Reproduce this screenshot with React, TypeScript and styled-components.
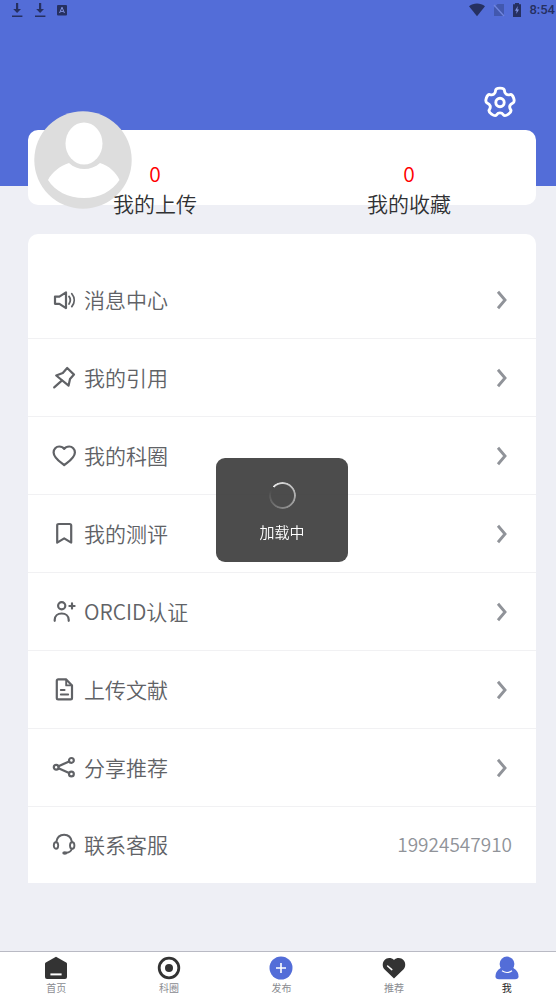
import React from "react";
import styled, { createGlobalStyle } from "styled-components";

const GlobalStyle = createGlobalStyle`
  * { box-sizing: border-box; }
  html, body { margin: 0; }
  body {
    background: #eeeff5;
    font-family: "Noto Sans CJK SC", sans-serif;
    font-weight: 350;
    color: #303133;
  }
  button { border: 0; padding: 0; background: none; font: inherit; color: inherit; cursor: pointer; }
  a { color: inherit; text-decoration: none; }
  svg { display: block; flex: none; }
`;

const Screen = styled.div`
  display: flex;
  flex-direction: column;
  min-height: 100vh;
  overflow-x: hidden;
`;

const Header = styled.header`
  display: flex;
  flex-direction: column;
  height: 186px;
  background: #536dd8;
`;

const StatusBar = styled.div`
  display: flex;
  align-items: center;
  justify-content: space-between;
  height: 20px;
  padding: 0 1px 0 10px;
  color: #263061;
`;

const StatusGroup = styled.div<{ $gap: number }>`
  display: flex;
  align-items: center;
  gap: ${(p) => p.$gap}px;
`;

const Clock = styled.time`
  font: 500 13px/20px Roboto, sans-serif;
`;

const SettingsButton = styled.button`
  align-self: flex-end;
  margin: 66px 40px 0 0;
  width: 32px;
  height: 32px;
  color: #fff;
`;

const Main = styled.main`
  flex: 1;
  padding: 0 20px 68px 28px;
`;

const ProfileCard = styled.section`
  position: relative;
  height: 75px;
  margin-top: -56px;
  border-radius: 10px;
  background: #fff;
`;

const Avatar = styled.div`
  position: absolute;
  left: 6px;
  top: -19px;
  width: 98px;
  height: 98px;
`;

const Stats = styled.div`
  position: relative;
  display: grid;
  grid-template-columns: 1fr 1fr;
  padding-top: 28px;
`;

const Stat = styled.a`
  display: flex;
  flex-direction: column;
  align-items: center;
  font-size: 21px;
  line-height: 30px;
`;

const StatCount = styled.span`
  color: #f00;
`;

const MenuCard = styled.section`
  margin-top: 29px;
  padding-top: 27px;
  border-radius: 10px 10px 0 0;
  background: #fff;
`;

const MenuRow = styled.button`
  display: flex;
  align-items: center;
  gap: 8px;
  width: 100%;
  height: 78px;
  padding: 0 24px;
  border-bottom: 1px solid #f1f1f3;
  color: #606266;
  text-align: left;

  &:last-child {
    height: 76px;
    border-bottom: 0;
  }
`;

const MenuLabel = styled.span`
  flex: 1;
  padding-bottom: 2px;
  font-size: 21px;
  line-height: 30px;
`;

const MenuValue = styled.span`
  padding-bottom: 2px;
  color: #909399;
  font-size: 19px;
  line-height: 30px;
`;

const Toast = styled.div`
  position: fixed;
  top: calc(50% + 12px);
  left: calc(50% + 4px);
  transform: translate(-50%, -50%);
  display: flex;
  flex-direction: column;
  align-items: center;
  gap: 12px;
  width: 132px;
  padding: 24px 0 19px;
  border-radius: 9px;
  background: rgba(56, 56, 56, 0.9);
  color: #fff;
  font-size: 15px;
  line-height: 22px;
`;

const Spinner = styled.div`
  width: 27px;
  height: 27px;
  border-radius: 50%;
  background: conic-gradient(from -45deg, #e8e8e8, #9a9a9a 50%, #4c4c4c 95%);
  mask: radial-gradient(circle, transparent 11px, #000 12px);
`;

const TabBar = styled.nav`
  display: grid;
  grid-template-columns: repeat(5, 1fr);
  height: 45px;
  margin-right: -7px;
  border-top: 1px solid #b9bac4;
  background: #fff;
`;

const Tab = styled.a<{ $active?: boolean }>`
  display: flex;
  flex-direction: column;
  align-items: center;
  padding-top: 4px;
  color: ${(p) => (p.$active ? "#1c1c1e" : "#8a8c91")};
  font-size: 10px;
  font-weight: 400;
  line-height: 16px;
`;

const LineIcon = ({ children }: { children: React.ReactNode }) => (
  <svg width="24" height="24" viewBox="0 0 24 24" fill="none" stroke="currentColor" strokeWidth="2.2" strokeLinejoin="round" strokeLinecap="round" aria-hidden="true">
    {children}
  </svg>
);

const DownloadIcon = () => (
  <svg width="14" height="16" viewBox="0 0 14 16" fill="currentColor" aria-hidden="true">
    <path d="M6 1h2.2v6h2.8L7.1 11 3.2 7H6zM2 13.4h10.4V15H2z" />
  </svg>
);

const Chevron = () => (
  <svg width="20" height="24" viewBox="0 0 20 24" fill="none" stroke="#909399" strokeWidth="2.9" aria-hidden="true">
    <path d="M6 3.8 13 12 6 20.2" />
  </svg>
);

// Five rounded lobes: quadratic curves run between the midpoints of a 20-point outline.
const gearPath = (() => {
  const points: [number, number][] = [];
  const add = (deg: number, r: number) => {
    const t = (deg * Math.PI) / 180;
    points.push([16 + r * Math.cos(t), 16.5 + r * Math.sin(t)]);
  };
  for (let i = 0; i < 5; i++) {
    const a = -90 + i * 72;
    add(a - 17, 15);
    add(a + 17, 15);
    add(a + 25, 10.6);
    add(a + 47, 10.6);
  }
  const n = points.length;
  const mid = (i: number) => {
    const [x1, y1] = points[i % n];
    const [x2, y2] = points[(i + 1) % n];
    return `${((x1 + x2) / 2).toFixed(2)} ${((y1 + y2) / 2).toFixed(2)}`;
  };
  const curves = points.map((_, i) => {
    const [x, y] = points[(i + 1) % n];
    return `Q${x.toFixed(2)} ${y.toFixed(2)} ${mid(i + 1)}`;
  });
  return `M${mid(0)}${curves.join("")}Z`;
})();

type MenuItem = { label: string; value?: string; icon: React.ReactNode };

const menu: MenuItem[] = [
  {
    label: "消息中心",
    icon: (
      <>
        <path d="M3 8.600h4.400l6.600-4.300v15.800l-6.600-4.300H3z" />
        <path d="M17 8.400c1.600 2.200 1.600 5.200 0 7.600M19.800 5.800c3.200 3.900 3.200 8.900 0 12.800" strokeWidth="1.800" />
      </>
    ),
  },
  {
    label: "我的引用",
    icon: (
      <>
        <path d="M15.2 2 22 8.600l-4 4.500-1.400 6.500L4.200 9.500 10.800 7z" />
        <path d="M9.800 14.600 2.200 21.400" />
      </>
    ),
  },
  {
    label: "我的科圈",
    icon: <path d="M12.200 21.200C8.400 18 1.600 13.800 1.600 8.400c0-3.400 2.500-5.900 5.600-5.900 2.100 0 3.900.8 5 2.400 1.100-1.600 2.900-2.400 5-2.400 3.100 0 5.700 2.500 5.700 5.900 0 5.400-6.900 9.600-10.700 12.800z" />,
  },
  {
    label: "我的测评",
    icon: <path d="M6.800 2h10.800c1.100 0 1.600.5 1.600 1.600v17l-7-4.200-7 4.200v-17C5.200 2.500 5.700 2 6.800 2z" />,
  },
  {
    label: "ORCID认证",
    icon: (
      <>
        <circle cx="9.700" cy="5.700" r="3.600" />
        <path d="M2.700 20.800v-1c0-3.800 3-6.300 7-6.300s7 2.500 7 6.300v1M20 3.400v5.200M17.400 6h5.200" />
      </>
    ),
  },
  {
    label: "上传文献",
    icon: (
      <>
        <path d="M6.200 1.400h8l5.800 6v12.600c0 .9-.5 1.400-1.400 1.400H6.200c-.9 0-1.400-.5-1.400-1.400V2.800c0-.9.5-1.400 1.400-1.400z" />
        <path d="M14.200 1.600v5.800h5.600M8.800 12h3.800M8.800 16.500h7.400" strokeWidth="1.900" />
      </>
    ),
  },
  {
    label: "分享推荐",
    icon: (
      <>
        <circle cx="4.200" cy="11.200" r="2.400" />
        <circle cx="19.400" cy="4.400" r="2.400" />
        <circle cx="19.400" cy="18" r="2.400" />
        <path d="M6.500 10.200 17.100 5.400M6.500 12.300l10.600 4.700" />
      </>
    ),
  },
  {
    label: "联系客服",
    value: "19924547910",
    icon: (
      <g strokeWidth="1.900">
        <ellipse cx="4" cy="12.500" rx="2.200" ry="3.300" />
        <ellipse cx="20.200" cy="12.500" rx="2.200" ry="3.300" />
        <path d="M4.200 9C5 4.300 8.200 1.700 12.100 1.700s7.100 2.600 7.900 7.300M19.800 16c-.8 2.300-2.400 3.500-5.400 3.800" />
        <ellipse cx="12.800" cy="20.100" rx="1.600" ry=".8" fill="currentColor" />
      </g>
    ),
  },
];

const tabs = [
  {
    label: "首页",
    icon: (
      <>
        <path d="M12 .8 22.200 6.600q.8.500.8 1.400v13q0 2-2 2H3q-2 0-2-2V8q0-.9.800-1.400z" fill="#333" />
        <path d="M6.400 18.400h11.200" stroke="#fff" strokeWidth="2" />
      </>
    ),
  },
  {
    label: "科圈",
    icon: (
      <>
        <circle cx="12" cy="12" r="9.800" fill="none" stroke="#333" strokeWidth="2.800" />
        <circle cx="12" cy="12" r="4" fill="#333" />
      </>
    ),
  },
  {
    label: "发布",
    icon: (
      <>
        <circle cx="12" cy="12" r="11.500" fill="#536dd8" />
        <path d="M12 7v10M7 12h10" stroke="#fff" strokeWidth="1.600" />
      </>
    ),
  },
  {
    label: "推荐",
    icon: (
      <>
        <path d="M12 22.600 2.400 13.200C.2 10.800.2 6.600 2.400 4.200 4.900 1.400 9.300 1.400 12 4c2.700-2.600 7.100-2.600 9.600.2 2.200 2.400 2.200 6.600 0 9z" fill="#333" />
        <path d="m5.600 10 4.200 3.600" stroke="#fff" strokeWidth="1.500" strokeLinecap="round" />
      </>
    ),
  },
  {
    label: "我",
    active: true,
    icon: (
      <>
        <path d="M7 11.600C3.200 13 .5 16.400.5 20.200c0 2.200 1.100 3 3.500 3h16c2.400 0 3.500-.8 3.500-3 0-3.800-2.700-7.200-6.500-8.600z" fill="#536dd8" />
        <circle cx="12" cy="8" r="7.400" fill="#536dd8" />
        <path d="M7 14.800q5 3.400 10 0" fill="none" stroke="#fff" strokeWidth="1.200" />
      </>
    ),
  },
];

export default function App() {
  return (
    <Screen>
      <GlobalStyle />
      <Header>
        <StatusBar>
          <StatusGroup $gap={9}>
            <DownloadIcon />
            <DownloadIcon />
            <svg width="12" height="12" viewBox="0 0 12 12" aria-hidden="true">
              <rect x="1" y="1" width="10" height="10.500" rx="1" fill="currentColor" />
              <path d="M3.600 9 6 3.200 8.400 9M4.500 7.400h3" fill="none" stroke="#8092e2" strokeWidth="1" />
            </svg>
          </StatusGroup>
          <StatusGroup $gap={7}>
            <svg width="18" height="14" viewBox="0 0 18 14" fill="currentColor" aria-hidden="true">
              <path d="M1 3.200C5.500-.3 12.500-.3 17 3.200L9 13.200z" />
            </svg>
            <svg width="12" height="14" viewBox="0 0 12 14" aria-hidden="true">
              <path d="M4.500 1H11v12H1V4.500z" fill="#4258ae" />
              <path d="m1 2 10 11" stroke="#7085de" strokeWidth="1.300" />
            </svg>
            <svg width="10" height="14" viewBox="0 0 10 14" aria-hidden="true">
              <path d="M3 0h4v1.200h2V14H1V1.200h2z" fill="currentColor" />
              <path d="M5.800 3 3 7.800h1.700L4.200 11 7 6.500H5.300z" fill="#8092e2" />
            </svg>
            <Clock>8:54</Clock>
          </StatusGroup>
        </StatusBar>
        <SettingsButton aria-label="设置">
          <svg width="32" height="32" viewBox="0 0 32 32" fill="none" stroke="currentColor" strokeWidth="2.900" strokeLinejoin="round" aria-hidden="true">
            <path d={gearPath} />
            <circle cx="16" cy="16.500" r="4.200" />
          </svg>
        </SettingsButton>
      </Header>
      <Main>
        <ProfileCard>
          <Avatar>
            <svg width="98" height="98" viewBox="0 0 98 98" role="img" aria-label="头像">
              <circle cx="49" cy="49" r="48.700" fill="#ddd" />
              <ellipse cx="50" cy="32.500" rx="18.500" ry="21" fill="#fff" />
              <path d="M35 52c8.500 8 22 8 31 0 9 3 16 9 19.500 17C78 80 66 87 50 87S21 80 14 69c4-8 12-14 21-17z" fill="#fff" />
            </svg>
          </Avatar>
          <Stats>
            <Stat href="#uploads">
              <StatCount>0</StatCount>
              <span>我的上传</span>
            </Stat>
            <Stat href="#favorites">
              <StatCount>0</StatCount>
              <span>我的收藏</span>
            </Stat>
          </Stats>
        </ProfileCard>
        <MenuCard>
          {menu.map((item) => (
            <MenuRow key={item.label}>
              <LineIcon>{item.icon}</LineIcon>
              <MenuLabel>{item.label}</MenuLabel>
              {item.value ? <MenuValue>{item.value}</MenuValue> : <Chevron />}
            </MenuRow>
          ))}
        </MenuCard>
      </Main>
      <TabBar>
        {tabs.map((tab) => (
          <Tab key={tab.label} href="#" $active={tab.active} aria-current={tab.active ? "page" : undefined}>
            <svg width="24" height="24" viewBox="0 0 24 24" aria-hidden="true">
              {tab.icon}
            </svg>
            {tab.label}
          </Tab>
        ))}
      </TabBar>
      <Toast role="status">
        <Spinner />
        加载中
      </Toast>
    </Screen>
  );
}
